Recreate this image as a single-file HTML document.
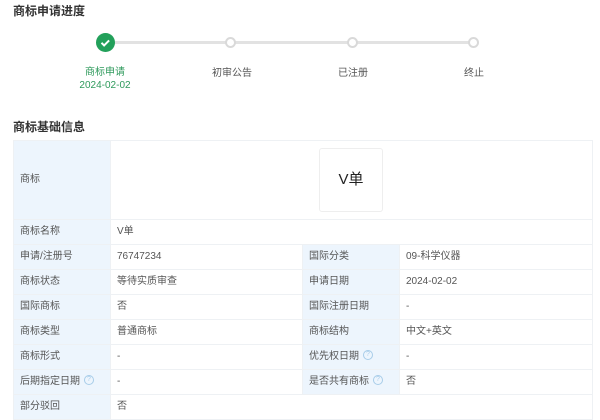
<!DOCTYPE html>
<html><head><meta charset="utf-8"><style>
body{margin:0;width:600px;height:415px;overflow:hidden;background:#fff;font-family:"Liberation Sans","Noto Sans CJK SC",sans-serif;color:#555;font-size:10px}
.t{position:absolute;left:13px;font-size:12px;font-weight:bold;color:#333}
.line{position:absolute;top:41px;left:105px;width:368px;height:3px;background:#e2e2e2}
.dot{position:absolute;top:37px;width:7px;height:7px;border:2px solid #d9d9d9;border-radius:50%;background:#fff}
.lbl{position:absolute;top:63px;width:100px;text-align:center;font-size:10px;color:#555}
table{position:absolute;left:13px;top:140px;width:580px;border-collapse:collapse;table-layout:fixed}
td{border:1px solid #eef1f4;height:24px;line-height:14px;padding:0 0 0 6px;font-size:10px;color:#555;vertical-align:middle;white-space:nowrap}
td.l{background:#edf5fd}
.q{display:inline-block;box-sizing:border-box;width:10px;height:10px;border:1px solid #a8cde9;border-radius:50%;color:#a8cde9;font-size:7px;line-height:8px;text-align:center;margin-left:4px;vertical-align:middle;position:relative;top:-1px}
</style></head><body>
<div class="t" style="top:2px">商标申请进度</div>
<div class="line"></div>
<div style="position:absolute;left:96px;top:33px;width:19px;height:19px;border-radius:50%;background:#22a05a"><svg width="19" height="19"><path d="M5.5 9.8l2.6 2.6 5-5" stroke="#fff" stroke-width="2" fill="none"/></svg></div>
<div class="dot" style="left:225px"></div>
<div class="dot" style="left:347px"></div>
<div class="dot" style="left:468px"></div>
<div class="lbl" style="left:55px;color:#2f9a5c">商标申请<br><span style="line-height:15px">2024-02-02</span></div>
<div class="lbl" style="left:182px;top:64px">初审公告</div>
<div class="lbl" style="left:303px;top:64px">已注册</div>
<div class="lbl" style="left:424px;top:64px">终止</div>
<div class="t" style="top:118px">商标基础信息</div>
<table>
<colgroup><col style="width:97px"><col style="width:192px"><col style="width:97px"><col></colgroup>
<tr><td class="l" style="height:78px">商标</td><td colspan="3" style="position:relative"><div style="position:absolute;left:208px;top:7px;width:62px;height:62px;border:1px solid #eee;border-radius:3px;text-align:center;line-height:62px;font-size:15px;color:#222">V单</div></td></tr>
<tr><td class="l">商标名称</td><td colspan="3">V单</td></tr>
<tr><td class="l">申请/注册号</td><td>76747234</td><td class="l">国际分类</td><td>09-科学仪器</td></tr>
<tr><td class="l">商标状态</td><td>等待实质审查</td><td class="l">申请日期</td><td>2024-02-02</td></tr>
<tr><td class="l">国际商标</td><td>否</td><td class="l">国际注册日期</td><td>-</td></tr>
<tr><td class="l">商标类型</td><td>普通商标</td><td class="l">商标结构</td><td>中文+英文</td></tr>
<tr><td class="l">商标形式</td><td>-</td><td class="l">优先权日期<span class="q">?</span></td><td>-</td></tr>
<tr><td class="l">后期指定日期<span class="q">?</span></td><td>-</td><td class="l">是否共有商标<span class="q">?</span></td><td>否</td></tr>
<tr><td class="l">部分驳回</td><td colspan="3">否</td></tr>
</table>
</body></html>
